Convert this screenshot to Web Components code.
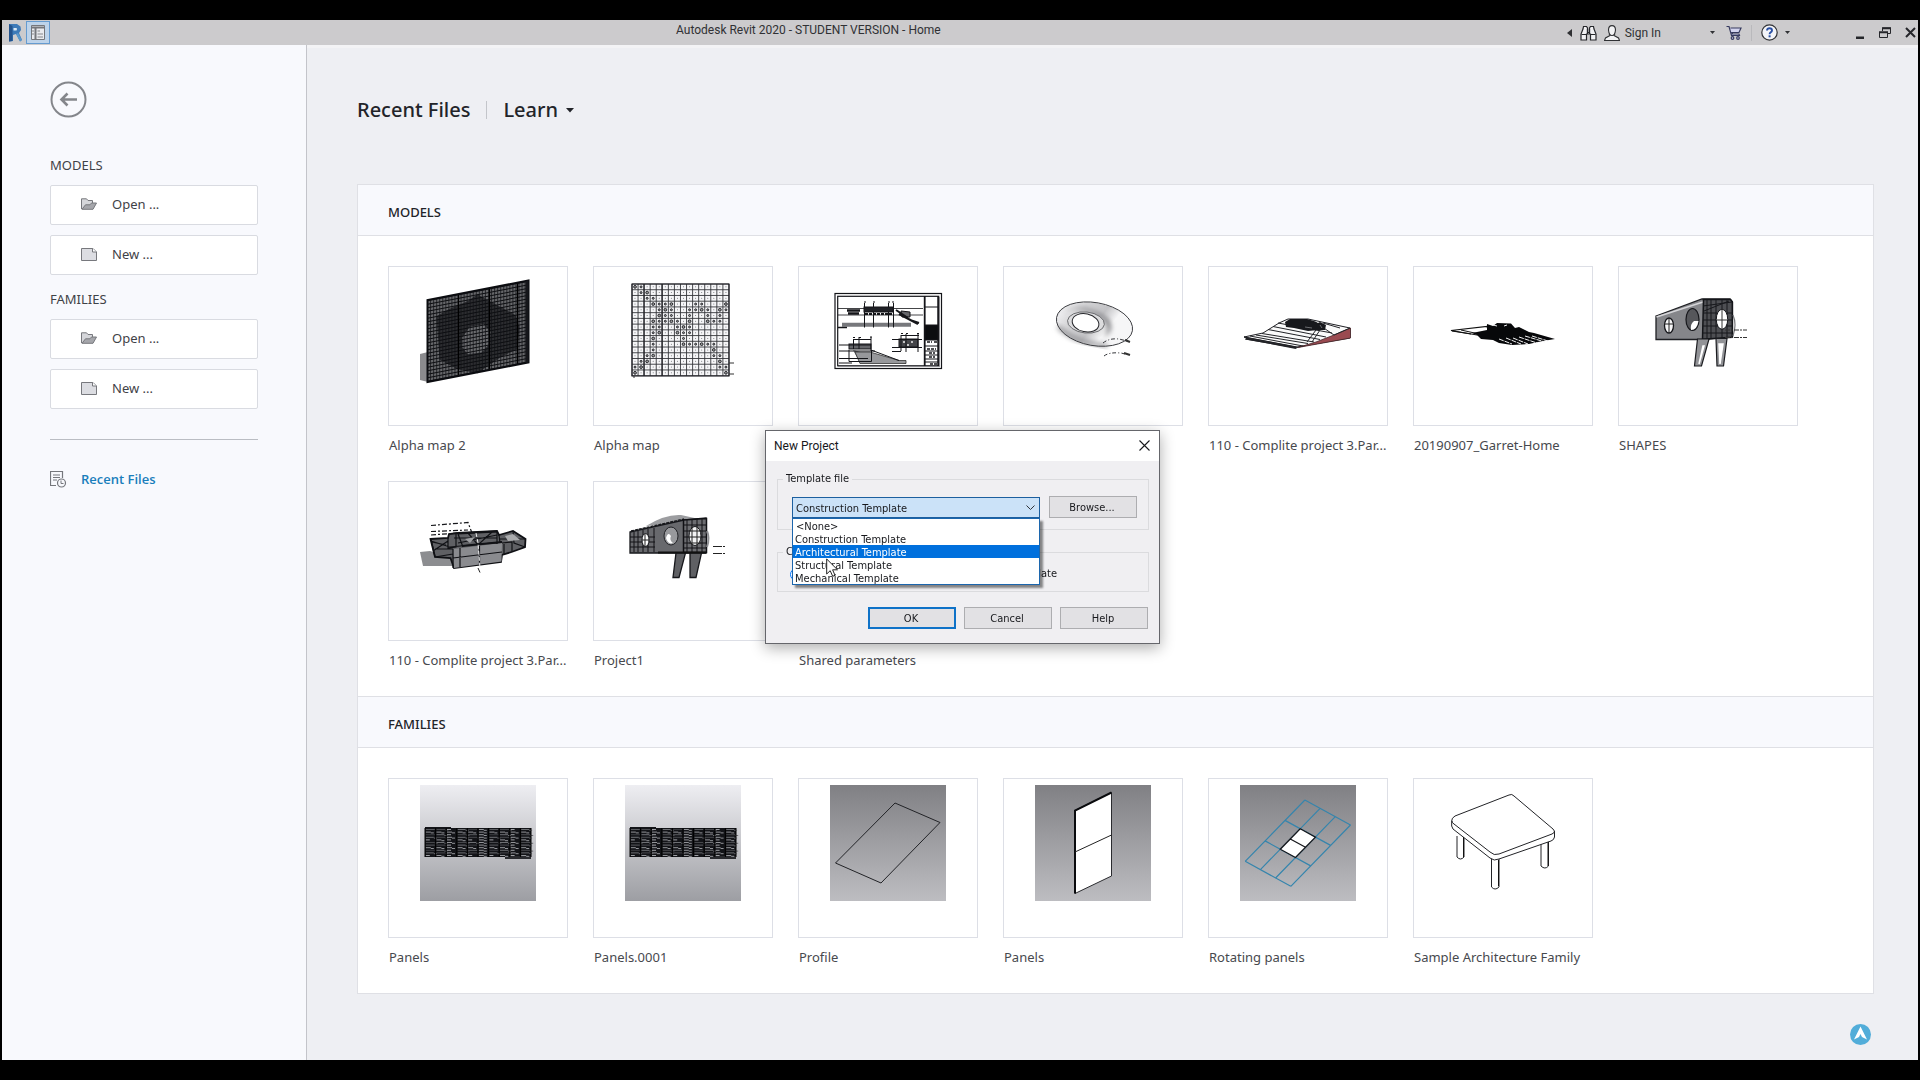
<!DOCTYPE html>
<html lang="en">
<head>
<meta charset="utf-8">
<title>Autodesk Revit 2020 - STUDENT VERSION - Home</title>
<style>
body{margin:0;background:#000;color:#3f4247;font:13px/20px "Noto Sans","Open Sans",sans-serif}
</style>
</head>
<body>
<revit-app></revit-app>
<script>
const define = (name, html, setup) => customElements.define(name, class extends HTMLElement {
  connectedCallback() {
    if (this.shadowRoot) return;
    const root = this.attachShadow({mode: 'open'});
    const t = document.createElement('template');
    t.innerHTML = '<style>*{box-sizing:border-box}button{font:inherit;color:inherit;cursor:default}</style>' + (typeof html === 'function' ? html(this) : html);
    root.append(t.content.cloneNode(true));
    if (setup) setup(this, root);
  }
});

/* ---------- drawings ---------- */
const rep = (n, f) => Array.from({length: n}, (_, i) => f(i)).join('');
const poly = (pts, attrs) => `<polygon points="${pts}" ${attrs}/>`;
const grad = (id, a, b) => `<defs><linearGradient id="${id}" x1="0" y1="0" x2="0" y2="1"><stop offset="0" stop-color="${a}"/><stop offset="1" stop-color="${b}"/></linearGradient></defs><rect x="32" y="7" width="116" height="116" fill="url(#${id})"/>`;

const drawings = {
  wall() {
    return poly('32,88 40,86 40,116 32,114', 'fill="#8b8b8e"') +
    `<g transform="matrix(1,-0.193,0,1,39.5,34)">
      <rect width="101" height="82" fill="#66676a"/>
      <path d="M9 18 L22 13 L40 9 L50 4 L62 13 L88 32 L92 45 L90 66 L72 72 L50 83 L30 75 L12 62Z" fill="#2c2d30"/>
      <path d="M35 44 L42 35 L56 35 L63 44 L62 56 L54 63 L40 62 L35 54Z" fill="#6c6d70"/>
      ${rep(24, i => `<path d="M0 ${i * 3.5 + .8}H101" stroke="#0c0d10" stroke-width="1"/>`)}
      ${rep(34, i => `<path d="M${i * 3.05} 0V82" stroke="#111216" stroke-width=".7"/>`)}
      <path d="M31 0V82M62 0V82M90 0V82" stroke="#000" stroke-width="1.2"/>
      <rect width="101" height="82" fill="none" stroke="#0b0c10" stroke-width="2"/>
      <rect x="98" width="3" height="82" fill="#15161a"/>
    </g>`;
  },
  alpha() {
    const rows = [[0,1],[1,2],[2,3],[3,4,5,6,10,11,15],[4,5,6,9,10,11,12,14,15],[4,5,6,9,12,14],[3,4,5,6,7,9,12,13,14],[3,4,7,8,9],[3,4,7,8,9],[3,8],[3,8,9,10,11,12,13],[3,13],[2,3,13,14],[1,2,14],[0,1,14,15],[0,15]];
    const w = 6.06, h = 5.73;
    return '<rect x="39" y="18" width="97" height="92" fill="#f6f6f8"/>' +
      rep(17, i => `<path d="M${39 + i * w} 18V110" stroke="#34353a" stroke-width=".9"/><path d="M39 ${18 + i * h}H136" stroke="#34353a" stroke-width=".9"/>`) +
      '<path d="M39 18H136V110H39ZM51 18V110M69 18V110" fill="none" stroke="#202126" stroke-width="1.2"/>' +
      rep(16, r => rep(16, c => `<circle cx="${39 + (c + .5) * w}" cy="${18 + (r + .5) * h}" ${rows[r].includes(c) ? `r="${(r + c) % 3 ? 1 : 1.4}" fill="#999" stroke="#1a1b20" stroke-width=".9"` : 'r=".5" fill="#66676b"'}/>`)) +
      '<path d="M136 97H141M136 108H141M41 110V112" stroke="#333" stroke-width="1"/>';
  },
  sheet() {
    return `<g fill="none" stroke="#141519">
      <rect x="37" y="27.500" width="106.500" height="75" fill="#fff" stroke-width="1.2"/>
      <rect x="39.700" y="30.300" width="101" height="69.500" stroke-width="1.2"/>
      <path d="M40 100.500H141.500V31" stroke="#8a8a8e"/>
      <path d="M126.700 30V100" stroke-width="1.800"/><path d="M140 30V100" stroke-width="1.500"/>
      <path d="M127 41H140M127 80H140M127 85H140M127 89H140M127 93H140M127 96H140" stroke-width="1"/>
      <rect x="127" y="59" width="13" height="15" fill="#0c0d10"/>
      <path d="M129 76H134M136 76H139M129 83H138M131 87H137M131 91H137M132 98H139" stroke-width="1.500" stroke-dasharray="3 1"/>
      <path d="M40 42.500H125M40 49H125" stroke-width=".8"/><path d="M44 58H113M44 59.500H113" stroke="#77787c" stroke-width="2.500"/>
      <path d="M66.500 37V61.500M75.500 37V61.500M90.500 37V61.500M95.500 37V61.500"/>
      <path d="M49 44.500H62M50 47.500H61" stroke-width="2.500"/>
      <rect x="66" y="41" width="29" height="5" fill="#202126"/><path d="M67 48H95" stroke-width="2" stroke-dasharray="3 1"/>
      <path d="M103 45L112 46V51H104Z" fill="#66676b"/><path d="M101 48L120 58M98 44L110 52M112 54L121 57" stroke-width="2"/>
      <path d="M40 61.500H49" stroke-width="1.500"/>
      <path d="M55 84L108 98V97H62Z" fill="#77787b" stroke="none"/><path d="M57 86L72 86L101 94.500H108V97.500H62Z" fill="#97989b" stroke="#333" stroke-width=".8"/>
      <rect x="51" y="78" width="22" height="5" fill="#65666a"/><path d="M51 84V95.500H73.500V84M41 79H73M41 85H77M41 92.500H70M41 97H54M73 84L101 94.500"/>
      <path d="M55.500 73V83M61 71V83M73 71V85M55 73.500H73"/>
      <rect x="101" y="73" width="19" height="8" fill="#45464a"/><path d="M94 73.500H124M94 81.500H124M94 85.500H103M103 69V85M108 68V86M120 68V86M103 69.500H121" />
      <path d="M105 76H107M113 76H115M109 79H111" stroke="#eee" stroke-width="1.500"/>
      <path d="M66 36H68M75 36H77M90 36H92M94 36H96M55 71.500H57M61 71.500H63M72 71H74M103 67.500H105M108 67.500H110M119 67.500H121" stroke-width="1.200"/>
    </g>`;
  },
  torus() {
    return `<defs><linearGradient id="tg" x1="0" y1="0" x2="1" y2=".3"><stop offset="0" stop-color="#858588"/><stop offset=".14" stop-color="#ececee"/><stop offset=".35" stop-color="#d2d2d4"/><stop offset=".6" stop-color="#c3c3c6"/><stop offset=".78" stop-color="#f6f6f7"/></linearGradient><filter id="tb" x="-30%" y="-30%" width="160%" height="160%"><feGaussianBlur stdDeviation="2.500"/></filter></defs>
    <g transform="rotate(10 91 58)"><ellipse cx="91.500" cy="58" rx="38.500" ry="21" fill="url(#tg)"/>
    <path d="M58 50Q80 38 104 51Q113 60 103 69Q110 55 94 49Q76 42 58 50Z" fill="#66666a" filter="url(#tb)"/>
    <path d="M56 67Q74 80 108 77" stroke="#88888c" stroke-width="3" fill="none" filter="url(#tb)"/>
    <ellipse cx="91.500" cy="58" rx="38.500" ry="21.500" fill="none" stroke="#333438" stroke-width=".9"/></g>
    <ellipse cx="83" cy="56.500" rx="18.500" ry="10.500" transform="rotate(6 83 56)" fill="#dcdcde" stroke="#55565a" stroke-width=".8"/>
    <ellipse cx="82.500" cy="56.700" rx="13.500" ry="9" transform="rotate(12 82 57)" fill="#fff" stroke="#26272b" stroke-width="1"/>
    <path d="M100 77Q106 72 116 73L124 75M101 90Q106 86 118 87L122 88" fill="none" stroke="#333438" stroke-width="1" stroke-dasharray="4 2 1 2"/><path d="M122 74L127 76M121 87L127 89" stroke="#333" stroke-width="2"/>`;
  },
  terrain() {
    return poly('36,71 55,67 71,57 80,53 100,53 142,62 142,72 89,81', 'fill="#fafafa" stroke="#202126" stroke-width="1"') +
    poly('142.500,62 142.500,72 90,81.500 108,76 126,69', 'fill="#9a4a50" stroke="#45272b" stroke-width=".8"') +
    `<g fill="none" stroke="#222327" stroke-width="1"><path d="M36 71L90 81.500M37 73L89 82M42 70L95 80M48 69L100 77.500M54 67.500L106 76M60 63.500L112 73.500M65 60.500L118 71M70 57L124 67M115 57L132 62M107 56L126 69L142 62"/><path d="M38 72.500L88 82" stroke-width="1.800"/><path d="M108 64L99 76M112 64L104 76" /></g>
    <path d="M77 56L82 53L99 53L106 55L110 57L112 56L118 59L117 64L110 64L100 65L86 62L78 61Z" fill="#17181c"/><path d="M97 61L104 62M112 59L114 62" stroke="#6b6c70" stroke-width="1"/>`;
  },
  garret() {
    return `<path d="M38 64.500L74 60.500L76 66L64 69Z" fill="#fff" stroke="#111" stroke-width="1.200"/>
    <path d="M39 65L58 68M48 64L66 68" stroke="#111" stroke-width="1"/>
    <path d="M59 67L74 64L74 58L80 60L84 57L98 57.500L102 62L106 61L116 66L121 67L142 73L130 75L125 76L116 78L99 79L86 77L80 74L68 73L64 69Z" fill="#07080a"/>
    <g stroke="#f3f3f4" stroke-width="1" stroke-dasharray="5 1"><path d="M86 73L99 78M93 72L108 78M100 72L115 78M106 71L124 77M112 70L132 76M119 70L135 75M80 59L84 60M91 60L94 59"/></g>`;
  },
  shapes() {
    return `<path d="M38 50L84 33L112 33L114.500 36V71L84.500 73.500H38Z" fill="#85868a" stroke="#1f2024" stroke-width="1.300"/>
    <path d="M38.500 51L85 36" stroke="#d5d5d8" stroke-width="1.500"/>
    <path d="M85.500 33.500H112.500L114.300 36V71.300L84.500 73.300Z" fill="#4e4f53" stroke="#141519" stroke-width="1.500"/>
    <g stroke="#17181c" stroke-width="1" fill="none"><path d="M89 34V73M93 34V73M98 34V73M104 34V73M109 34V72M85 40L114 36M85 47H114M85 54H114M85 60H114M85 67H114M86 45L111 35"/></g>
    <ellipse cx="51" cy="59.500" rx="4.500" ry="7.500" fill="#f6f6f7" stroke="#17181c" stroke-width="1.300"/><path d="M51 52V67M47 58H55" stroke="#222" stroke-width="1"/>
    <ellipse cx="74.500" cy="53.500" rx="6.500" ry="11" fill="#56575b" stroke="#17181c" stroke-width="1.200"/><path d="M76 55Q72 58 73 64Q79 64 80.500 55Z" fill="#fff"/>
    <ellipse cx="104" cy="53.300" rx="5.700" ry="10" fill="#fff" stroke="#17181c" stroke-width="1"/><path d="M104 43V63M99 54H109" stroke="#333" stroke-width="1"/>
    <path d="M115 49Q119 58 115 70" fill="none" stroke="#77787b" stroke-width="1.200"/>
    <path d="M79.500 73H91L83.500 100H76.500Z M98 72.500H109L105.500 100H99Z" fill="#929397" stroke="#1b1c20" stroke-width="1.200"/>
    <path d="M85 80L81 98L86 80ZM101 78L102 98L105 78Z" fill="#fff" stroke="#fff" stroke-width="1.500"/>
    <path d="M107 64H129M107 71.500H129" stroke="#333" stroke-width="1" stroke-dasharray="5 1 2 1"/>`;
  },
  ship() {
    return poly('32,71 42,70 66,77 64,85 35,85', 'fill="#8c8d90"') +
    `<path d="M42.500 58L60 57L61 53L70 52L109 50L111 54L125 50L137.500 58L137 66L125 70.500L114 74L113 81L66 87L62.500 77L47 76Z" fill="#5f6064" stroke="#0f1014" stroke-width="1.800"/>
    <path d="M65 68L114 62L113.500 80.500L66 87Z" fill="#8a8b8f"/>
    <g fill="none" stroke="#101115" stroke-width="1.200"><path d="M43 60L62 66L114 61M65 68V87M72 67V86M91.500 65V83M65 77L114 71M47 68H65M43 58L47 76M47 76L65 73M60 57V67L68 66V53M70 53L75 66M70 62L109 54M109 50V63M80 52L90 64L104 51M111 54L112 62M114 62L124 61V70M125 50L126 62L137 66M111 58L137 58M116 74V63M66 57H109M45 70L60 60M44 61L58 64"/><path d="M70 52.500L109 50.500M74 65L114 61" stroke-width="2"/></g>
    <path d="M117 55L125 53L132 59L120 60Z" fill="#aaabad"/><path d="M77 58L87 56L82 62Z" fill="#a0a1a4"/>
    <path d="M43 44.500L80 41.500L84 52M43 50.500L80 49M43 54L76 51.500" fill="none" stroke="#16171b" stroke-width="1.200" stroke-dasharray="5 2 2 2"/><path d="M88 52L90 62L92 87" stroke="#eee" stroke-width="1" stroke-dasharray="4 2" fill="none"/><path d="M90 87L92 91.500" stroke="#222" stroke-width="1"/>`;
  },
  project() {
    return `<path d="M53 45Q72 33 88 34L106 38L90 42Z" fill="#9c9da0"/>
    <path d="M37 51L91 39L113 37V72H37Z" fill="#68696d" stroke="#16171b" stroke-width="1.300"/>
    <path d="M38 50L91 38" stroke="#16171b" stroke-width="1.300" stroke-dasharray="3 1"/>
    <path d="M90.500 39L113.500 37.500V71.500H90.500Z" fill="#6c6d71" stroke="#101115" stroke-width="1.500"/>
    <g stroke="#121317" stroke-width="1"><path d="M41 51V71M45 50V71M50 49V71M55 48V71M61 47V71M37 56H62M37 61H62M37 66H62M94 39V71M99 38V71M104 38V71M109 38V71M90 44H113M90 50H113M90 56H113M90 62H113M90 67H113"/></g>
    <ellipse cx="52.500" cy="59" rx="3.500" ry="6.500" fill="#fff" stroke="#16171b"/><path d="M52 53V66M49 59H56" stroke="#222"/>
    <ellipse cx="78" cy="55" rx="7" ry="9" fill="#98999c" stroke="#222327"/><path d="M73 57Q75 50 78 55Q76 59 80 62Q75 64 73 57Z" fill="#fff"/>
    <ellipse cx="102" cy="55" rx="6" ry="9.500" fill="#f4f4f5" stroke="#16171b"/><path d="M99 46V64M104 46V64M96 50H108M96 56H108M96 62H108" stroke="#222" stroke-width="1"/>
    <path d="M114 50Q117 57 114 66" fill="none" stroke="#909195" stroke-width="2"/>
    <path d="M83 72H92.500L86 96.500H80ZM97 72H108.500L103 96.500H97Z" fill="#5f6064" stroke="#16171b" stroke-width="1.300"/>
    <path d="M65 71.500H113" stroke="#111" stroke-width="2"/><path d="M120 65.500H133M120 72.500H133" stroke="#222" stroke-width="1.200" stroke-dasharray="9 1 2 1"/>`;
  },
  bricks() {
    return grad('g', '#eeeef2', '#9d9ea3') + '<rect x="37" y="50" width="106" height="29" fill="#131418"/><rect x="37" y="49" width="26" height="3" fill="#131418"/><rect x="117" y="78" width="26" height="3" fill="#2a2b2f"/>' +
      rep(11, r => rep(10, c => { const k = (r * 7 + c * 5 + r * c) % 6; return `<path d="M${37.800 + c * 10.600} ${51.500 + r * 2.600}h${[9, 5, 9, 8, 4, 9][k]}${k % 2 ? 'm0 .8h3' : ''}" stroke="${['#6c6d72', '#b4b5ba', '#45464b', '#85868b', '#c4c5ca', '#55565b'][k]}" stroke-width=".8"/>`; })) +
      rep(11, i => `<path d="M${37 + i * 10.600} 50V79" stroke="#000" stroke-width="1"/>`);
  },
  profile() {
    return grad('g', '#808084', '#bdbdc1') + poly('97,25 142,44.500 83,105 37.500,85', 'fill="none" stroke="#222327" stroke-width="1"');
  },
  panel() {
    return grad('g', '#808084', '#bdbdc1') + poly('72,32.500 108.500,14.500 108.500,98 72,115.500', 'fill="#fff" stroke="#2a2b2f" stroke-width="1"') +
      '<path d="M108.500 14.500L72 32.500V115.500" fill="none" stroke="#0a0b0e" stroke-width="2"/><path d="M72 74L108.500 57" stroke="#222" stroke-width="1"/>';
  },
  rotating() {
    const a = [96.900, 22], u = [45.600, 25], v = [-59.700, 61.300];
    const p = (s, t) => `${(a[0] + s * u[0] + t * v[0]).toFixed(1)} ${(a[1] + s * u[1] + t * v[1]).toFixed(1)}`;
    return grad('g', '#808084', '#bdbdc1') + '<g stroke="#3585ad" stroke-width="1.2">' +
      rep(4, i => `<path d="M${p(i / 3, 0)}L${p(i / 3, 1)}M${p(0, i / 3)}L${p(1, i / 3)}"/>`) + '</g>' +
      `<path d="M${p(1/3, 1/3)}L${p(2/3, 1/3)}L${p(2/3, 2/3)}L${p(1/3, 2/3)}Z M${p(1/3, .5)}L${p(2/3, .5)}" fill="#fff" stroke="#16171b" stroke-width="1.300"/>`;
  },
  table() {
    return `<g fill="#fff" stroke="#222327" stroke-width="1"><path d="M44 58V79Q47.500 83 51 79V58M128 62V88Q132 92 135.500 88V60M78.500 80V109Q82 113 86 109V80"/>
    <path d="M38.700 43Q38.500 40 42 38L96 17Q99 15.500 101 18L140 51Q142 53 141.500 55V59Q141 62 138 63L86 81Q81 83.500 77 80L40 51Q38 49 38.700 43Z"/>
    <path d="M39 43Q39 45 41 46L77 74Q81 78 86 76L139 56Q142 54.500 141.500 53" fill="none"/></g><path d="M85.500 82V108M135 64V88M50.500 59V79" stroke="#111" stroke-width="1"/>`;
  },
  none() { return ''; }
};

define('file-tile', el => `<style>
:host{display:block;width:180px}
a{display:block;color:#47494e;text-decoration:none}
.pic{display:block;height:160px;border:1px solid #dddfe6;background:#fff}
svg{display:block}
.name{display:block;height:21px;margin-top:9px;padding-left:1px;white-space:nowrap}
</style><a href="#"><span class="pic"><svg width="178" height="158" viewBox="1 1 178 158" aria-hidden="true">${drawings[el.getAttribute('art')]()}</svg></span><span class="name"><slot></slot></span></a>`);

define('tile-section', el => `<style>
:host{display:block}
:host(:not(:first-child)){border-top:1px solid #dfe0e5}
h2{margin:0;height:51px;padding:0 30px;border-bottom:1px solid #dfe0e5;background:#f8f9fd;color:#222429;font:500 13px/54px "Noto Sans",sans-serif}
.grid{display:flex;flex-wrap:wrap;gap:25px;padding:30px 30px 25px}
</style><h2>${el.getAttribute('heading')}</h2><div class="grid"><slot></slot></div>`);

const folder = '<svg width="16" height="12" viewBox="0 0 16 12"><path d="M.5 11V.8H5.500L7 2.500H11.500V5" fill="#d5d6da" stroke="#77787d"/><path d="M1 11.300L4.500 6.800H9L10.500 5H15.500L12 11.300Z" fill="#a5a6ab" stroke="#77787d"/></svg>';
const page = '<svg width="16" height="13" viewBox="0 0 16 13"><path d="M.5.5H12L15.500 4V12.500H.5Z" fill="#dcdde2" stroke="#77787d"/><path d="M11.500.5V4H15.500" fill="#fff" stroke="#77787d"/></svg>';

define('action-button', el => `<style>
:host{display:block}
button{display:flex;align-items:center;gap:15px;width:100%;height:40px;padding:0 30px 2px;border:1px solid #d9dbe1;border-radius:2px;background:#fff;text-align:left}
svg{display:block}
</style><button type="button">${el.getAttribute('icon') === 'open' ? folder : page}<span><slot></slot></span></button>`);

define('side-bar', `<style>
:host{display:flex;flex-direction:column;width:305px;flex:none;padding:36px 48px 0 48px;border-right:1px solid #c3c4ca;background:#f8f9fd}
.back{display:block;width:37px;height:37px;padding:0;border:0;background:none}
svg{display:block}
h3{margin:14px 0 10px;font:400 13px/20px "Noto Sans",sans-serif}
.back+h3{margin-top:37px}
.stack{display:grid;gap:10px}
hr{width:100%;height:1px;margin:30px 0 29px;border:0;background:#babdc3}
a{display:flex;align-items:center;gap:14px;color:#1a7ebb;font:600 13px/20px "Open Sans",sans-serif;text-decoration:none}
</style>
<button class="back" type="button" aria-label="Back"><svg width="37" height="37" viewBox="0 0 37 37" fill="none" stroke="#84868b"><circle cx="18.500" cy="18.500" r="17" stroke-width="2"/><path d="M27 18.500H12M17.500 12.500L11.500 18.500L17.500 24.500" stroke-width="2.600"/></svg></button>
<h3>MODELS</h3>
<div class="stack"><action-button icon="open">Open ...</action-button><action-button icon="new">New ...</action-button></div>
<h3>FAMILIES</h3>
<div class="stack"><action-button icon="open">Open ...</action-button><action-button icon="new">New ...</action-button></div>
<hr>
<a href="#"><svg width="17" height="17" viewBox="0 0 17 17" fill="none" stroke="#75777c"><path d="M6 14.500H.5V.5H12.500V7" stroke-width="1.200"/><path d="M3 4H10M3 6.500H10M3 9H7"/><circle cx="11.500" cy="12" r="4" fill="#f8f9fd" stroke-width="1.200"/><path d="M11 9.500V12.500H13.500"/></svg>Recent Files</a>`);

define('title-bar', `<style>
:host{display:flex;align-items:center;height:25px;background:#cccbcd;color:#303134;font:12px/16px Roboto,sans-serif}
button{display:block;padding:0;border:0;background:none}
svg{display:block}
.left{display:flex;align-items:center;gap:3px;padding-left:6px}
.home{border:1px solid #659bd0;background:#bdd3ea;width:24px;height:23px;display:grid;place-items:center}
h1{flex:1;align-self:flex-start;margin:0;padding-top:2px;text-align:center;font:400 12px/16px Roboto,sans-serif}
.right{display:flex;align-items:center}
.sign{display:flex;align-items:center;gap:5px}
.bar{width:1px;height:16px;background:#b9b9bc}
</style>
<div class="left">
<svg width="15" height="19" viewBox="0 0 15 19"><path d="M1 1H9L12.500 3.500L13 7L11 10L14 17L12 18.500L8 11L5 12V18L1 18.500Z" fill="#3d7ab8"/><path d="M1 1L4.500 3V18L1 18.500Z" fill="#23538d"/><path d="M5.500 5H8.500L9 6L8.500 7.500H5.500Z" fill="#dce9f5"/><path d="M8 11L10 10L14 17L12 18.500Z" fill="#5a98cc"/></svg>
<button class="home" type="button" aria-label="Home"><svg width="14" height="15" viewBox="0 0 14 15"><path d="M.5.5H13.500V14.500H.5Z" fill="#e9eaee" stroke="#75777c"/><path d="M.5 2.500H13.500M4.500 3V14" stroke="#75777c" stroke-width="2" fill="none"/><path d="M6.500 6H9M6.500 9H12M6.500 12H12M1 6H3M1 9H3" stroke="#85878c" fill="none"/></svg></button>
</div>
<h1>Autodesk Revit 2020 - STUDENT VERSION - Home</h1>
<div class="right">
<button type="button" aria-label="Collapse"><svg width="5" height="8"><path d="M5 0V8L0 4Z" fill="#303134"/></svg></button>
<button type="button" aria-label="Search" style="margin-left:8px"><svg width="17" height="16" viewBox="0 0 17 16" fill="#f1f1f3" stroke="#25262a" stroke-width="1.200"><path d="M3.500 1.500H6.500L7.500 3V7.500H9.500V3L10.500 1.500H13.500L14 4L16 9V15H10.500V9H6.500V15H1V9L3 4Z"/><path d="M1.500 9.500H6M11 9.500H15.500M7.500 4V9M9.500 4V9" fill="none"/></svg></button>
<button class="sign" type="button" style="margin-left:7px"><svg width="16" height="16" viewBox="0 0 16 16" fill="#f3f3f5" stroke="#303134" stroke-width="1.100"><path d="M5.500 9.500L6 10.500L1.500 13L.5 15.500H15.500L14.500 13L10 10.500L10.500 9.500Z"/><path d="M8 .6Q11.500.6 11.500 5Q11 10.500 8 10.500Q5 10.500 4.500 5Q4.500.6 8 .6Z"/></svg>Sign In</button>
<button type="button" aria-label="Account menu" style="margin-left:49px"><svg width="5" height="3"><path d="M0 0H5L2.500 3Z" fill="#303134"/></svg></button>
<button type="button" aria-label="Store" style="margin-left:11px"><svg width="16" height="15" viewBox="0 0 16 15" fill="#d3d4ee" stroke="#363a5e" stroke-width="1.200"><path d="M.5 1.500H3L5.500 10.500H13.500L13 9H6.500L6 7.500H13L15 3H4.500"/><circle cx="6.500" cy="13" r="1.300"/><circle cx="12" cy="13" r="1.300"/></svg></button>
<span class="bar" style="margin-left:9px"></span>
<button type="button" aria-label="Help" style="margin-left:9px"><svg width="17" height="17" viewBox="0 0 17 17"><circle cx="8.500" cy="8.500" r="7.700" fill="#f3f4f8" stroke="#303134" stroke-width="1.200"/><path d="M6 6.500Q6.200 4.300 8.500 4.300Q11 4.300 11 6.400Q11 7.600 9.700 8.300Q8.600 9 8.600 10.200" fill="none" stroke="#2a50a5" stroke-width="1.900"/><rect x="7.600" y="11.300" width="2" height="2" fill="#2a50a5"/></svg></button>
<button type="button" aria-label="Help menu" style="margin-left:7px"><svg width="5" height="3"><path d="M0 0H5L2.500 3Z" fill="#303134"/></svg></button>
<button type="button" aria-label="Minimize" style="margin-left:66px"><svg width="8" height="12"><path d="M0 9.500H8V12H0Z" fill="#25262a"/></svg></button>
<button type="button" aria-label="Restore" style="margin-left:15px"><svg width="12" height="11" viewBox="0 0 12 11" fill="none" stroke="#25262a"><path d="M3.500 4V1H11.500V6.500H9"/><path d="M3 1.200H12M0 5.200H9" stroke-width="2"/><path d="M.5 5V10.500H8.500V5"/></svg></button>
<button type="button" aria-label="Close" style="margin:0 2px 0 14px"><svg width="11" height="11"><path d="M1 1L10 10M10 1L1 10" stroke="#25262a" stroke-width="2"/></svg></button>
</div>`);

define('home-page', `<style>
:host{display:block;flex:1;min-width:0;padding:0 44px 0 50px;background:#eeeff3;border-top:3px solid #f3f3f5}
nav{display:flex;align-items:center;height:28px;margin:48px 0 60px;color:#222429;font:500 20px/28px "Noto Sans",sans-serif}
nav a,nav button{color:inherit;text-decoration:none;padding:0;border:0;background:none}
nav button{display:flex;align-items:center;gap:8px}
.bar{width:1px;height:18px;margin:0 16px;background:#c3c5ca}
.panel{border:1px solid #dfe0e5;background:#fff}
</style>
<nav><a href="#">Recent Files</a><span class="bar"></span><button type="button">Learn <svg width="8" height="5"><path d="M0 0H8L4 4.500Z" fill="#222429"/></svg></button></nav>
<div class="panel">
<tile-section heading="MODELS">
<file-tile art="wall">Alpha map 2</file-tile>
<file-tile art="alpha">Alpha map</file-tile>
<file-tile art="sheet"></file-tile>
<file-tile art="torus"></file-tile>
<file-tile art="terrain">110 - Complite project 3.Par...</file-tile>
<file-tile art="garret">20190907_Garret-Home</file-tile>
<file-tile art="shapes">SHAPES</file-tile>
<file-tile art="ship">110 - Complite project 3.Par...</file-tile>
<file-tile art="project">Project1</file-tile>
<file-tile art="none">Shared parameters</file-tile>
</tile-section>
<tile-section heading="FAMILIES">
<file-tile art="bricks">Panels</file-tile>
<file-tile art="bricks">Panels.0001</file-tile>
<file-tile art="profile">Profile</file-tile>
<file-tile art="panel">Panels</file-tile>
<file-tile art="rotating">Rotating panels</file-tile>
<file-tile art="table">Sample Architecture Family</file-tile>
</tile-section>
</div>`);

define('template-select', `<style>
:host{display:block;position:relative;height:21px}
select{appearance:none;display:block;width:100%;height:21px;margin:0;padding:2px 3px 0;border:1px solid #1c5f9f;border-radius:0;background:#cbe2f8;color:#17181c;font:inherit;outline:0}
.arrow{position:absolute;right:5px;top:8px}
ul{position:absolute;left:0;right:0;top:21px;z-index:1;margin:0;padding:0;list-style:none;border:1px solid #1c66ad;background:#fff;box-shadow:3px 3px 2px rgba(0,0,0,.45);line-height:15px}
li{height:13px;padding-left:2px}
li:first-child{padding-left:3px}
li[aria-selected=true]{background:#0070dd;color:#fff}
</style>
<select aria-label="Template file"><option>Construction Template</option></select>
<svg class="arrow" width="9" height="6"><path d="M.5.5L4.500 4.500L8.500.5" fill="none" stroke="#303338"/></svg>
<ul role="listbox" aria-label="Templates"><li role="option">&lt;None&gt;</li><li role="option">Construction Template</li><li role="option" aria-selected="true">Architectural Template</li><li role="option">Structural Template</li><li role="option">Mechanical Template</li></ul>`);

define('push-button', `<style>
:host{display:block;width:88px;height:22px}
button{display:block;width:100%;height:100%;padding:1px 2px 0 0;border:1px solid #adadb0;background:#e2e1e4;border-radius:0}
:host([primary]) button{border:2px solid #0f72c8}
</style><button type="button"><slot></slot></button>`);

define('new-project-dialog', `<style>
:host{display:block;position:relative;width:395px;border:1px solid #65666b;background:#f0eff2;box-shadow:0 4px 14px rgba(0,0,0,.32);color:#17181c;font:11px/14px "DejaVu Sans Condensed",sans-serif}
header{display:flex;align-items:center;justify-content:space-between;height:30px;padding:0 9px 0 8px;background:#fff}
h2{margin:0;font:400 12px/30px Roboto,sans-serif}
header button{padding:0 0 2px;border:0;background:none}
svg{display:block}
.body{padding:11px 10px 14px 11px}
fieldset{min-width:0;margin:0 0 15px;border:1px solid #dbdbde}
legend{margin-left:-9px;padding:0 3px}
.file{display:flex;align-items:flex-end;gap:9px;padding:10px 11px 11px 14px}
.file template-select{flex:1}
.kind{display:flex;justify-content:space-between;padding:7px 91px 9px 14px}
label{display:flex;align-items:center;gap:4px;height:16px;white-space:nowrap}
input{width:13px;height:13px;margin:0 0 0 -2px}
.buttons{display:flex;justify-content:flex-end;gap:8px;padding-right:1px}
.cursor{position:absolute;left:60px;top:127px;z-index:2}
</style>
<header><h2>New Project</h2><button type="button" aria-label="Close"><svg width="11" height="11"><path d="M.5.5L10.500 10.500M10.500.5L.5 10.500" stroke="#17181c" stroke-width="1.100"/></svg></button></header>
<div class="body">
<fieldset class="file"><legend>Template file</legend><template-select></template-select><push-button>Browse...</push-button></fieldset>
<fieldset class="kind"><legend>Create new</legend><label><input type="radio" name="kind" aria-label="Project" checked></label><label><input type="radio" name="kind">Project template</label></fieldset>
<div class="buttons"><push-button primary>OK</push-button><push-button>Cancel</push-button><push-button>Help</push-button></div>
</div>
<svg class="cursor" width="13" height="19" viewBox="0 0 13 19"><path d="M.7 1V16L4.200 12.700L6.700 18.300L9 17.300L6.600 11.800H11.500Z" fill="#fff" stroke="#222" stroke-width="1"/></svg>`);

define('revit-app', `<style>
:host{display:flex;flex-direction:column;min-height:100vh;padding:20px 2px;box-sizing:border-box;background:#000}
main{display:flex;flex:1;position:relative}
.modal{position:fixed;inset:0;display:grid;place-items:center;padding:0 0 6px 5px}
.help{position:absolute;right:47px;bottom:15px;padding:0;border:0;background:none}
svg{display:block}
</style>
<title-bar></title-bar>
<main><side-bar></side-bar><home-page></home-page>
<button class="help" type="button" aria-label="Assistant"><svg width="21" height="21" viewBox="0 0 21 21"><circle cx="10.500" cy="10.500" r="10.500" fill="#52add9"/><path d="M10.500 2.500L17 15.500L12 13L10.500 10L9 13L4 15.500Z" fill="#fff"/></svg></button></main>
<div class="modal"><new-project-dialog></new-project-dialog></div>`);
</script>
</body>
</html>
